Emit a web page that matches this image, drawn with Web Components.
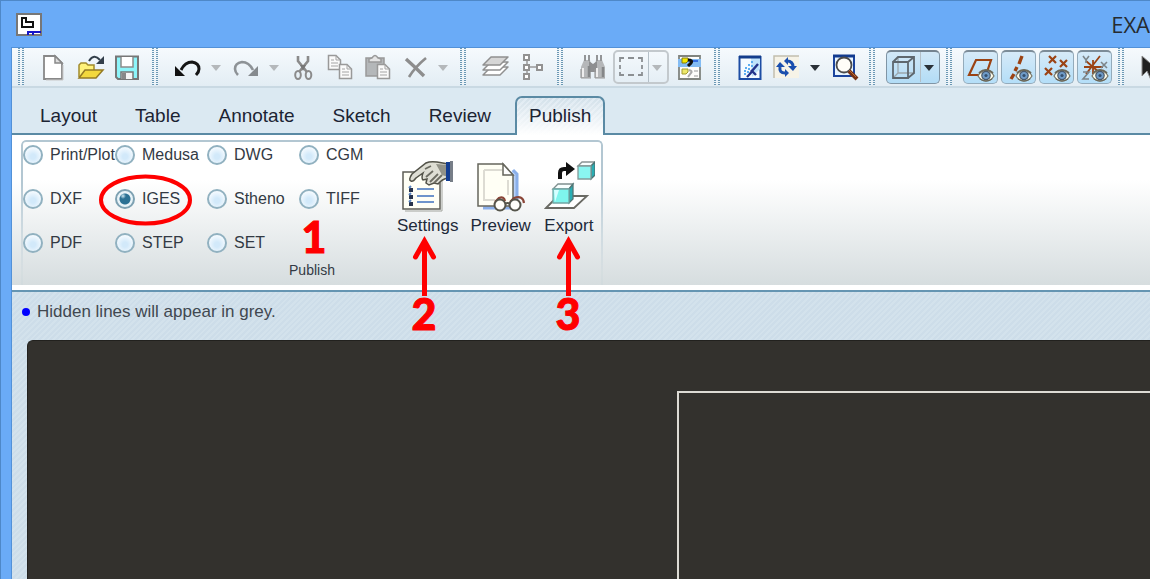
<!DOCTYPE html>
<html lang="en">
<head>
<meta charset="utf-8">
<title>EXA</title>
<style>
html, body { margin: 0; height: 100%; }
body { font-family: "Liberation Sans", Arial, sans-serif; color: #333a44; background: #6aabf7; overflow: hidden; }
</style>
</head>
<body>
<app-window>
  <title-bar slot="title">EXA</title-bar>
  <tool-bar>
    <tool-group>
      <tool-button icon="new" label="New"></tool-button>
      <tool-button icon="open" label="Open"></tool-button>
      <tool-button icon="save" label="Save"></tool-button>
    </tool-group>
    <tool-group>
      <tool-button icon="undo" label="Undo"></tool-button>
      <tool-button icon="drop" label="Undo list" narrow></tool-button>
      <tool-button icon="redo" label="Redo"></tool-button>
      <tool-button icon="drop" label="Redo list" narrow></tool-button>
      <tool-button icon="cut" label="Cut"></tool-button>
      <tool-button icon="copy" label="Copy"></tool-button>
      <tool-button icon="paste" label="Paste"></tool-button>
      <tool-button icon="remove" label="Delete"></tool-button>
      <tool-button icon="drop" label="Delete options" narrow></tool-button>
    </tool-group>
    <tool-group>
      <tool-button icon="layers" label="Layers"></tool-button>
      <tool-button icon="tree" label="Model tree"></tool-button>
    </tool-group>
    <tool-group>
      <tool-button icon="find" label="Find"></tool-button>
      <split-button>
        <tool-button icon="select" label="Selection box" framed></tool-button>
        <tool-button icon="drop" label="Selection options" narrow framed></tool-button>
      </split-button>
      <tool-button icon="list" label="Selected items"></tool-button>
    </tool-group>
    <tool-group>
      <tool-button icon="repaint" label="Repaint"></tool-button>
      <tool-button icon="refresh" label="Refresh"></tool-button>
      <tool-button icon="dropdark" label="Refresh options" narrow></tool-button>
      <tool-button icon="zoom" label="Zoom"></tool-button>
    </tool-group>
    <tool-group>
      <split-button active>
        <tool-button icon="cube" label="Display style" framed></tool-button>
        <tool-button icon="dropdark" label="Display style options" narrow framed></tool-button>
      </split-button>
    </tool-group>
    <tool-group spaced>
      <tool-button icon="planes" label="Plane display" pressed></tool-button>
      <tool-button icon="axes" label="Axis display" pressed></tool-button>
      <tool-button icon="points" label="Point display" pressed></tool-button>
      <tool-button icon="csys" label="Coordinate system display" pressed></tool-button>
    </tool-group>
    <tool-group>
      <tool-button icon="cursor" label="Select"></tool-button>
    </tool-group>
  </tool-bar>
  <tab-strip>
    <tab-item>Layout</tab-item>
    <tab-item>Table</tab-item>
    <tab-item>Annotate</tab-item>
    <tab-item>Sketch</tab-item>
    <tab-item>Review</tab-item>
    <tab-item active>Publish</tab-item>
  </tab-strip>
  <ribbon-panel>
    <ribbon-group caption="Publish">
      <format-options></format-options>
      <command-row>
        <ribbon-command icon="settings">Settings</ribbon-command>
        <ribbon-command icon="preview">Preview</ribbon-command>
        <ribbon-command icon="export">Export</ribbon-command>
      </command-row>
    </ribbon-group>
  </ribbon-panel>
  <status-line>Hidden lines will appear in grey.</status-line>
  <drawing-area></drawing-area>
  <callout-layer slot="overlay"></callout-layer>
</app-window>

<script>
const eye = '<g transform="translate(11 15)"><path d="M0 7Q3 1 8 1Q13 1 16 7Q13 12 8 12Q3 12 0 7Z" fill="#fdfbe9" stroke="#77766a" stroke-width="1.2"/><path d="M1 4Q8 -2 15 4" fill="none" stroke="#6b6859" stroke-width="2"/><circle cx="8" cy="6.500" r="4.200" fill="#6f9cc9" stroke="#4a5a6c" stroke-width="1.2"/><circle cx="8" cy="6.500" r="1.600" fill="#34506f"/><path d="M2 10Q8 14 14 10" fill="none" stroke="#6b6859" stroke-width="1.500"/></g>';
const page = (x, y) => `<g transform="translate(${x} ${y})"><path d="M.5 .5H8L12.500 5V14.500H.5Z" fill="#fafafa" stroke="#999" stroke-width="1.500"/><path d="M8 .5V5H12.500M3 5H6M3 8H10M3 11H10" fill="none" stroke="#a4a4a4"/></g>`;

const icons = {
  drop: '<path d="M8 12H18L13 18Z" fill="#b4b8bb"/>',
  dropdark: '<path d="M8 12H18L13 18Z" fill="#2a3138"/>',
  new: '<path d="M4 3H15L22 10V26H4Z" fill="#fff" stroke="#888" stroke-width="1.8"/><path d="M15 3V10H22Z" fill="#ddd" stroke="#888" stroke-width="1.500"/><path d="M6 27H23V12" stroke="#c8c8c8" fill="none"/>',
  open: '<path d="M2 24V12L4 10H9L11 12H17V17" fill="#fff27a" stroke="#a18b2d" stroke-width="1.500"/><path d="M2 25L8 17H26L19 25Z" fill="#f3d83c" stroke="#957b25" stroke-width="1.500"/><path d="M12 8Q17 0 23 7" fill="none" stroke="#333f4a" stroke-width="2"/><path d="M27 3V11H19Z" fill="#333f4a"/>',
  save: '<path d="M2 3.500H24V26H4L2 24Z" fill="#8cf5fa" stroke="#777" stroke-width="2"/><path d="M7 4V14H19V4" fill="#fff" stroke="#8c8c8c" stroke-width="1.500"/><path d="M7 26V19H19V26" fill="#f5f5f5" stroke="#777" stroke-width="1.500"/><path d="M8 20H12V26H8Z" fill="#888"/>',
  undo: '<path d="M7 17Q11 9 18 9Q25 10 25 16Q25 19 22 22" fill="none" stroke="#151515" stroke-width="3"/><path d="M1 13V23H11Z" fill="#111"/>',
  redo: '<path d="M21 17Q17 9 10 9Q3 10 3 16Q3 19 6 22" fill="none" stroke="#8d9296" stroke-width="2.600"/><path d="M26 13V23H16Z" fill="#858a8e"/>',
  cut: '<path d="M8 3V8L17 19M18 3V8L9 19" fill="none" stroke="#8b8b8b" stroke-width="2.600"/><path d="M10 12H16L13 18Z" fill="#777"/><ellipse cx="8" cy="22" rx="2.800" ry="4" fill="none" stroke="#8b8b8b" stroke-width="2"/><ellipse cx="18.500" cy="22" rx="2.800" ry="4" fill="none" stroke="#8b8b8b" stroke-width="2"/>',
  copy: page(1, 2) + page(12, 11),
  paste: '<path d="M2 5H20V23H2Z" fill="#b4b7b9" stroke="#999" stroke-width="1.500"/><path d="M5 9V6L8 5Q11 0 14 5L17 6V9Z" fill="#e5e5e5" stroke="#999" stroke-width="1.500"/>' + page(13, 11),
  remove: '<path d="M5 6Q14 14 23 23" fill="none" stroke="#8d8d8d" stroke-width="3.400"/><path d="M25 5Q14 14 8 24" fill="none" stroke="#8d8d8d" stroke-width="2.600"/>',
  layers: '<g stroke="#909090" stroke-width="1.500" stroke-linejoin="round"><path d="M1 22L9 14H26L18 22Z" fill="#fff"/><path d="M1 17L9 9H26L18 17Z" fill="#fff"/><path d="M1 12L9 4H26L18 12Z" fill="#d6d6d6"/></g>',
  tree: '<path d="M8 5V23M8 14H20" stroke="#999" stroke-width="1.500"/><g fill="#fff" stroke="#929292" stroke-width="2"><path d="M5 2H10V7H5ZM5 12H10V17H5ZM5 21H10V26H5ZM18 12H23V17H18Z"/></g>',
  find: '<path d="M5 7H11L12 12V25H2V14ZM17 7H23L26 14V25H16V12Z" fill="#b5b7b9"/><path d="M10 8L14 11L18 8V19H10Z" fill="#8e8f91"/><path d="M5 2H7V8H5ZM9 2H11V8H9ZM17 2H19V8H17ZM21 2H23V8H21Z" fill="#939597"/><path d="M4 15V24M18 15V24" stroke="#eee" stroke-width="2"/><path d="M10 13V24M24 14V24" stroke="#858789" stroke-width="2.500"/><path d="M2 25H12M16 25H26M2 16V25M16 16V25" stroke="#999" stroke-width="1.200"/>',
  select: '<path d="M2 9V5H6M10 5H16M20 5H24V9M24 12V16M24 19V22H20M16 22H10M6 22H2V19M2 16V12" fill="none" stroke="#8b8f92" stroke-width="1.800"/>',
  list: '<path d="M3 3H24V26H3Z" fill="#fdfdfb" stroke="#80847f" stroke-width="1.800"/><path d="M2 6H25V14H2Z" fill="#83bcf4"/><path d="M6 5H12V8L10 10H6Z" fill="#f4e900" stroke="#827d12"/><path d="M12 7Q17 7 15 10L12 13" fill="none" stroke="#111" stroke-width="3"/><path d="M17 8H22" stroke="#1b55dc" stroke-width="1.500"/><path d="M18 18H22M18 23H22" stroke="#999"/><path d="M6 16H12V19L10 21H6Z" fill="#eee96a" stroke="#a09a30"/><path d="M13 17Q17 18 15 20L12 24" fill="none" stroke="#aaa" stroke-width="2"/>',
  repaint: '<path d="M3.500 4H24.500V26H3.500Z" fill="#f4fbff" stroke="#1d4da4" stroke-width="2"/><path d="M15 5H24V16L16 24Z" fill="#bfe3fb"/><path d="M3 4H25" stroke="#123c8b" stroke-width="3"/><path d="M8 18H10M9 15H11M12 12H14M15 9H17M11 19H13M12 16H14M15 13H17M8 21H10" stroke="#5cadf0" stroke-width="2"/><path d="M11 24Q15 20 16 18L22 11M15 17L20 22" fill="none" stroke="#24348a" stroke-width="2.400"/>',
  refresh: '<path d="M1 3H26V25H1Z" fill="#f6f3e7"/><path d="M1 25V3H26" fill="none" stroke="#c2bfae" stroke-width="1.500"/><path d="M7 14Q6 20 12 20M14 8Q20 8 20 14" fill="none" stroke="#1b4fae" stroke-width="3"/><path d="M3 14L7 9L12 14ZM12 16L16 20L12 24ZM15 13H24L20 18ZM15 4V12L11 8Z" fill="#1b4fae"/>',
  zoom: '<path d="M3 3H23V23H3Z" fill="#e8f5ff" stroke="#1b449d" stroke-width="2"/><path d="M2 3H24" stroke="#123b8f" stroke-width="3"/><circle cx="13" cy="12" r="7.500" fill="#fffdf8" stroke="#4b4b4b" stroke-width="1.800"/><path d="M18 18L26 26" stroke="#753113" stroke-width="4"/><path d="M18 17L25 24" stroke="#c06a34"/>',
  cube: '<path d="M8 4H24V20H8V4M3 25L8 20" fill="none" stroke="#9ba6ad" stroke-width="1.300"/><path d="M3 9H18V25H3ZM3 9L8 4H24V20L18 25M18 9L24 4" fill="none" stroke="#5e676e" stroke-width="1.800"/>',
  planes: '<path d="M2 21L9 6H24L19 21Z" fill="none" stroke="#9b4314" stroke-width="2.200"/>' + eye,
  axes: '<path d="M6 25L9 20M10 17L12 13M14 10L17 2" fill="none" stroke="#9b4314" stroke-width="3.400"/>' + eye,
  points: '<path d="M6 2L13 9M13 2L6 9M17 6L24 13M24 6L17 13M2 14L9 21M9 14L2 21" fill="none" stroke="#9b4314" stroke-width="2.200"/>' + eye,
  csys: '<path d="M12 6V20M3 13H22M5 7L19 19M19 2L5 20" fill="none" stroke="#9b4314" stroke-width="1.800"/><path d="M2 2L5 6L8 2M5 6V9M20 8L26 14M26 8L20 14M2 18H8L2 25H8" fill="none" stroke="#7d8589" stroke-width="1.600"/>' + eye,
  cursor: '<path d="M2 3V23L7 18L11 27L15 25L11 17H18Z" fill="#202020" stroke="#8c8c8c"/>'
};

const largeIcons = {
  settings: '<path d="M1 12H38V49H1Z" fill="#fffff5" stroke="#5e5e55" stroke-width="1.500"/><path d="M3 51H40V16" fill="none" stroke="#a2a49e"/><path d="M7 28H11V32H7ZM7 35H11V39H7ZM7 42H11V46H7Z" fill="#28344c"/><path d="M7 28L9 26M7 35L9 33M7 42L9 40" stroke="#5983bd" stroke-width="2"/><path d="M15 29H32M15 36H32M15 42H32" stroke="#6e94cb" stroke-width="2"/><path d="M9 21Q6 20 10 14L24 3Q28 1 35 2L46 4V18Q40 19 36 24L32 23L27 25L24 23L25 19L21 20Q19 18 21 13L14 18Q11 22 9 21Z" fill="#deded4" stroke="#525248" stroke-width="1.500"/><path d="M23 9L29 6M24 17L31 11M28 22L36 14M32 23L40 15" fill="none" stroke="#6c6c62" stroke-width="1.800"/><path d="M34 4L46 5V17L40 15Z" fill="#929288"/><path d="M44 2H48V21H44Z" fill="#143e91"/><path d="M48 1H51V22H48Z" fill="#777e88"/>',
  preview: '<path d="M8 48H42V14L38 10" fill="#b7d0f7" stroke="#8aafe9" stroke-width="3"/><path d="M3 4H28L38 15V46H3Z" fill="#fffff5" stroke="#66665c" stroke-width="1.500"/><path d="M28 4V15H38Z" fill="#fff" stroke="#66665c" stroke-width="1.500"/><path d="M9 10H27M9 10V40H20M33 20V35" fill="none" stroke="#dddcd3" stroke-width="2"/><path d="M20 42L24 38Q29 36 30 41M35 42L39 38Q48 35 49 43" fill="none" stroke="#8a4537" stroke-width="2.200"/><g fill="#fffffa" stroke="#55554b" stroke-width="2"><circle cx="25" cy="45" r="5.500"/><circle cx="40" cy="45" r="5.500"/></g><path d="M30 44Q33 42 35 44" stroke="#55554b" stroke-width="2" fill="none"/>',
  export: '<path d="M3 48L15 36H44L31 48Z" fill="#fff" stroke="#6a6a64" stroke-width="1.800"/><g stroke-width="1.300"><path d="M10 29L15 24H30L26 29Z" fill="#f8ffff" stroke="#7e8e8e"/><path d="M26 29L30 24V39L26 43Z" fill="#29aeb4" stroke="#517676"/><path d="M10 29H26V43H10Z" fill="#7ef5ed" stroke="#72a7a5"/><path d="M35 6L39 2H52L48 6Z" fill="#f8ffff" stroke="#899494"/><path d="M48 6L52 2V15L48 19Z" fill="#29aeb4" stroke="#4b7373"/><path d="M35 6H48V19H35Z" fill="#8af6f1" stroke="#829a99"/></g><path d="M11 30H16L12 42" fill="#d5ffff"/><path d="M17 19V13Q17 9 21 9H24" fill="none" stroke="#111" stroke-width="4"/><path d="M23 2L32 9L23 16Z" fill="#111"/>'
};

class Part extends HTMLElement {
  constructor() { super(); this.attachShadow({ mode: "open" }); }
  connectedCallback() {
    const t = document.createElement("template");
    t.innerHTML = `<style>*{box-sizing:border-box}${this.constructor.css}</style>${this.render()}`;
    this.shadowRoot.replaceChildren(t.content.cloneNode(true));
  }
  render() { return "<slot></slot>"; }
}
const define = (name, css, render) => {
  const c = class extends Part {};
  c.css = css;
  if (render) c.prototype.render = render;
  customElements.define(name, c);
};

define("app-window", `
  :host { display: flex; flex-direction: column; min-height: 100vh; box-sizing: border-box; position: relative; overflow: hidden; background: #6aabf7; border-top: 1px solid #4e88c8; border-left: 1px solid #4e88c8; }
  main { flex: 1; display: flex; flex-direction: column; margin-left: 10px; border-left: 1px solid #5291d8; border-top: 1px solid #5291d8; min-width: 0; background: #cfdfea; }
`, () => `<slot name="title"></slot><main><slot></slot></main><slot name="overlay"></slot>`);

define("title-bar", `
  :host { display: flex; align-items: center; justify-content: space-between; height: 46px; padding-left: 15px; font: 22px/30px "Open Sans", sans-serif; color: #262b31; }
  svg { display: block; }
  span { white-space: nowrap; }
`, () => `<svg width="26" height="24" viewBox="0 0 26 24" aria-hidden="true"><path d="M1 2H25V23H1Z" fill="#fff" stroke="#777" stroke-width="2"/><path d="M6 6H10V10H17V15H6Z" fill="#fff" stroke="#111" stroke-width="2"/><path d="M12 23V20H25M17 20V23" fill="none" stroke="#1515c8" stroke-width="2"/></svg><span><slot></slot></span>`);

define("tool-bar", `
  :host { display: flex; height: 40px; padding-left: 6px; box-sizing: border-box; background: linear-gradient(#f6fafd, #e3edf4); border-bottom: 2px solid #c9d9e3; overflow: hidden; }
`);
define("tool-group", `
  :host { display: flex; flex: none; align-items: center; padding-right: 6px; }
  i { width: 6px; height: 37px; align-self: flex-start; margin-right: 11px; background: repeating-linear-gradient(transparent 0 1px, #f0f6fa 1px 2px), linear-gradient(90deg, #6b98b4 0 2px, transparent 2px 4px, #6b98b4 4px 6px); }
  div { display: flex; gap: 0; }
  :host([spaced]) div { gap: 3px; }
`, () => `<i></i><div><slot></slot></div>`);
define("split-button", `
  :host { display: flex; margin: 0 2px; border: 2px solid #c3c9cd; border-radius: 5px; height: 34px; box-sizing: border-box; }
  :host([active]) { margin: 0; border: 1px solid #8095a5; border-top: 2px solid #74838f; background: linear-gradient(#d2e8f7, #b2dcf6); }
`);
define("tool-button", `
  :host { display: block; width: 37px; height: 34px; }
  :host([narrow]) { width: 21px; }
  :host([framed]) { width: 33px; height: 30px; }
  :host([framed][narrow]) { width: 19px; border-left: 1px solid #b4c0c8; box-sizing: border-box; }
  :host([pressed]) { width: 35px; }
  button { display: flex; align-items: center; justify-content: center; width: 100%; height: 100%; padding: 0; border: 0; background: none; overflow: hidden; }
  :host([pressed]) button { border: 1px solid #94abbb; border-top: 2px solid #7c8c98; border-radius: 5px; background: linear-gradient(#d6eaf8, #b4def8); }
  svg { flex: none; display: block; }
`, function () {
  const on = this.hasAttribute("pressed") ? ' aria-pressed="true"' : "";
  return `<button type="button" aria-label="${this.getAttribute("label")}"${on}><svg width="28" height="28" viewBox="0 0 28 28" aria-hidden="true">${icons[this.getAttribute("icon")]}</svg></button>`;
});

define("tab-strip", `
  :host { display: flex; align-items: flex-end; gap: 10px; height: 47px; padding-left: 14px; box-sizing: border-box; background: linear-gradient(#5a8aa4, #5a8aa4) bottom / 100% 2px no-repeat #dbe9f2; }
`);
define("tab-item", `
  :host { display: block; flex: none; }
  button { display: block; height: 39px; padding: 0 12px 2px; border: 2px solid transparent; border-bottom: 0; border-radius: 7px 7px 0 0; background: none; font: 19px/34px "Liberation Sans", Arial, sans-serif; color: #1c2433; }
  :host([active]) button { border-color: #5a8aa4; background: linear-gradient(#dce8f000, #ffffff), repeating-linear-gradient(135deg, #d3e1ea 0 2px, #dfeaf2 2px 4px); }
`, () => `<button type="button"><slot></slot></button>`);

define("ribbon-panel", `
  :host { display: block; padding: 5px 0 0 9px; background: linear-gradient(#fff 45px, #d6dddf); border-bottom: 5px solid #fff; }
`);
define("ribbon-group", `
  :host { display: grid; position: relative; width: max-content; min-width: 582px; height: 145px; box-sizing: border-box; padding: 4px 2px 6px; grid-template: auto 18px / auto 1fr; align-content: space-between; }
  .edge { position: absolute; inset: 0; border: 2px solid #b3c7d2; border-bottom: 0; border-radius: 5px 5px 0 0; pointer-events: none; -webkit-mask-image: linear-gradient(#000 30%, #0002 90%); mask-image: linear-gradient(#000 30%, #0002 90%); }
  p { grid-column: 1 / -1; margin: 0; text-align: center; font-size: 14px; line-height: 18px; }
`, function () { return `<div class="edge"></div><slot></slot><p>${this.getAttribute("caption")}</p>`; });

define("format-options", `
  :host { display: block; }
  fieldset { display: grid; grid-template-columns: repeat(4, 92px); gap: 22px 0; margin: 0; padding: 0; border: 0; }
  label { display: flex; align-items: center; gap: 7px; height: 22px; font-size: 16px; white-space: nowrap; }
  input { appearance: none; flex: none; width: 20px; height: 20px; margin: 0; border: 2px solid #91b1c0; border-radius: 50%; background: radial-gradient(circle at 50% 60%, #d2e9fa 20%, #f6fbff 75%); }
  input:checked { border-color: #7da1b2; background: radial-gradient(circle at 6px 5px, #cfe8f3 0, #cfe8f300 3px), radial-gradient(circle, #2b7194 0 5px, #e8f3f8 6px); }
`, () => {
  const names = ["Print/Plot", "Medusa", "DWG", "CGM", "DXF", "IGES", "Stheno", "TIFF", "PDF", "STEP", "SET"];
  return `<fieldset aria-label="Format">${names.map((n, i) => `<label for="f${i}"><input type="radio" id="f${i}" name="format"${n === "IGES" ? " checked" : ""}>${n}</label>`).join("")}</fieldset>`;
});
define("command-row", `
  :host { display: flex; align-items: flex-start; gap: 12px; padding: 16px 0 0 6px; }
`);
define("ribbon-command", `
  :host { display: block; }
  button { display: flex; flex-direction: column; align-items: center; gap: 3px; padding: 0; border: 0; background: none; font: 17px/22px "Liberation Sans", Arial, sans-serif; color: #1e2a3a; }
  svg { display: block; }
`, function () { return `<button type="button"><svg width="52" height="52" viewBox="0 0 52 52" aria-hidden="true">${largeIcons[this.getAttribute("icon")]}</svg><span><slot></slot></span></button>`; });

define("status-line", `
  :host { display: flex; align-items: center; gap: 7px; height: 50px; padding: 0 10px 8px; box-sizing: border-box; border-top: 2px solid #6595b2; font-size: 17px; line-height: 22px; color: #414850; background: repeating-linear-gradient(135deg, #cddde9 0 2px, #d3e2ec 2px 4px); }
  i { width: 8px; height: 8px; border-radius: 50%; background: #00f; }
`, () => `<i></i><span><slot></slot></span>`);

define("drawing-area", `
  :host { display: flex; flex: 1; box-sizing: border-box; padding-left: 15px; background: repeating-linear-gradient(135deg, #cddde9 0 2px, #d3e2ec 2px 4px); }
  section { display: flex; flex: 1; padding: 50px 0 0 649px; background: #33312d; border: solid #22211e; border-width: 1px 0 0 1px; border-radius: 6px 0 0 0; }
  div { flex: 1; border: solid #dddbd4; border-width: 2px 0 0 2px; }
`, () => `<section aria-label="Drawing"><div></div></section>`);

define("callout-layer", `
  :host { position: absolute; top: -1px; left: -1px; pointer-events: none; }
  svg { display: block; }
  text { font: 900 43px Lato, sans-serif; fill: #f00; stroke: #f00; stroke-width: 1px; text-anchor: middle; }
`, () => `<svg width="620" height="340" viewBox="0 0 620 340">
  <g fill="none" stroke="#f00" stroke-width="4"><ellipse cx="145.500" cy="200" rx="44.500" ry="23.500"/>
  <g stroke-width="5"><path d="M424.500 296V244M568.500 296V244"/><path d="M415.500 257L424.500 241L433.500 257M559.500 257L568.500 241L577.500 257" stroke-linecap="round"/></g></g>
  <text x="314" y="253">1</text><text x="424" y="330">2</text><text x="568" y="330">3</text>
</svg>`);
</script>
</body>
</html>
